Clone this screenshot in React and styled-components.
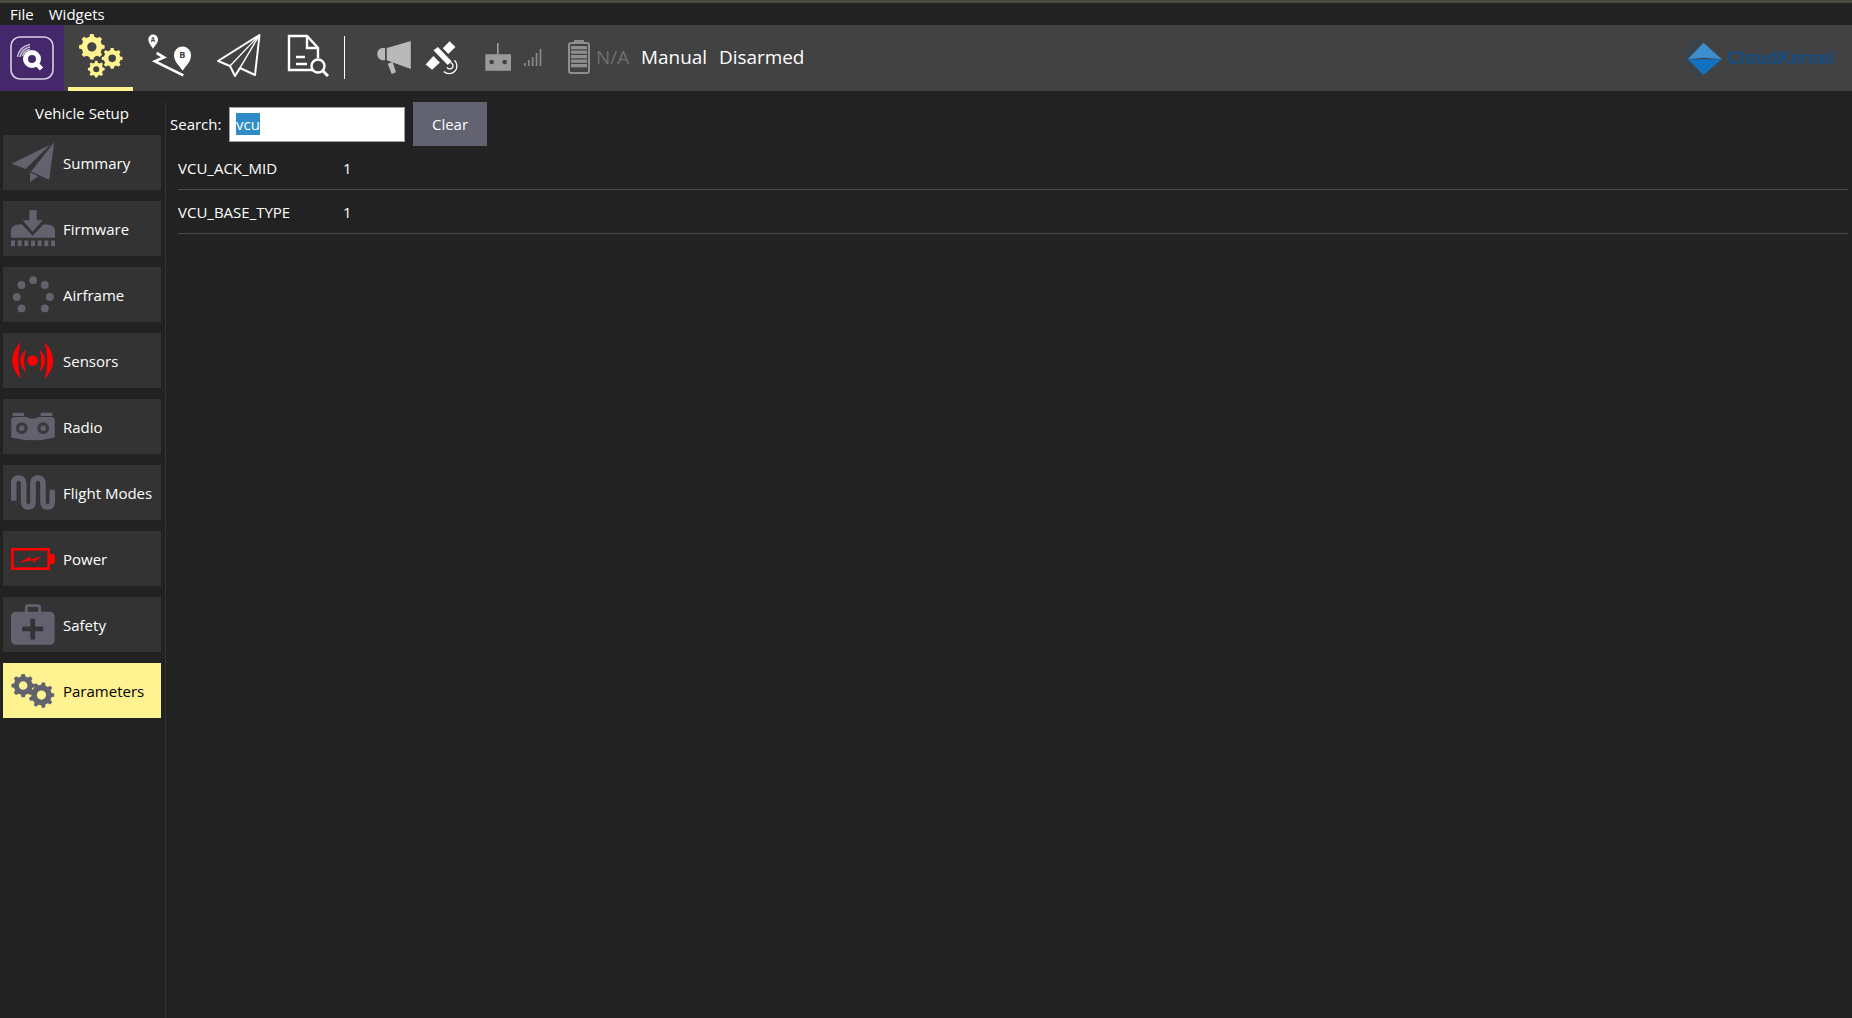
import React from "react";
import styled, { createGlobalStyle } from "styled-components";

const GlobalStyle = createGlobalStyle`
  html, body {
    margin: 0;
    height: 100%;
    overflow: hidden;
    background: #222222;
  }
  * {
    box-sizing: border-box;
  }
`;

const Page = styled.div`
  height: 100vh;
  display: flex;
  flex-direction: column;
  background: #222222;
  color: #ffffff;
  font-family: "Open Sans", "Noto Sans", sans-serif;
  border-top: 3px solid #4c4c44;
`;

const MenuBar = styled.div`
  height: 22px;
  display: flex;
  align-items: center;
  gap: 15px;
  padding-left: 10px;
  font-size: 15px;
`;

const Toolbar = styled.div`
  height: 66px;
  display: flex;
  align-items: center;
  background: #424242;
`;

const LogoButton = styled.div`
  width: 64px;
  height: 100%;
  display: flex;
  align-items: center;
  justify-content: center;
  background: #45286c;
  margin-right: 4px;
`;

const ToolButton = styled.div`
  width: 65px;
  height: 100%;
  margin-right: 4px;
  display: flex;
  align-items: center;
  justify-content: center;
  padding-bottom: 2px;
  border-bottom: 4px solid ${(p) => (p.$active ? "#fff291" : "transparent")};
  border-top: 1px solid transparent;
`;

const Divider = styled.div`
  width: 1px;
  height: 43px;
  margin-bottom: 1px;
  margin-right: 31px;
  background: #ffffff;
`;

const StatusGroup = styled.div`
  height: 100%;
  display: flex;
  align-items: center;
  padding-bottom: 2px;
`;

const Glyph = styled.svg`
  display: block;
  flex: none;
  width: ${(p) => p.$w}px;
  height: ${(p) => p.$h}px;
  margin-right: ${(p) => p.$mr || 0}px;
`;

const StatusText = styled.span`
  font-size: 18.9px;
  color: ${(p) => (p.$dim ? "#6f6f6f" : "#ffffff")};
  margin-right: ${(p) => p.$mr || 0}px;
`;

const Brand = styled.div`
  margin-left: auto;
  padding-right: 18px;
  display: flex;
  align-items: center;
  gap: 5px;
  filter: blur(0.6px);
`;

const BrandName = styled.span`
  font-family: "Liberation Sans", sans-serif;
  font-weight: 700;
  font-size: 18px;
  color: #124f88;
`;

const Body = styled.div`
  flex: 1;
  display: flex;
  padding-top: 11px;
  min-height: 0;
`;

const Sidebar = styled.div`
  width: 166px;
  padding: 0 4px 0 3px;
  border-right: 1px solid #333333;
  display: flex;
  flex-direction: column;
  gap: 11px;
`;

const SideTitle = styled.div`
  height: 22px;
  line-height: 22px;
  text-align: center;
  font-size: 15px;
`;

const SideItem = styled.div`
  height: 55px;
  display: flex;
  align-items: center;
  gap: 8px;
  padding-left: 8px;
  font-size: 15px;
  background: ${(p) => (p.$active ? "#fff291" : "#333333")};
  color: ${(p) => (p.$active ? "#000000" : "#ffffff")};
`;

const SideIconBox = styled.div`
  width: 44px;
  height: 44px;
  flex: none;
  display: flex;
  align-items: center;
  justify-content: center;
`;

const Main = styled.div`
  flex: 1;
  min-width: 0;
  padding: 0 4px;
`;

const SearchRow = styled.div`
  height: 44px;
  display: flex;
  align-items: center;
  font-size: 15px;
`;

const SearchLabel = styled.span`
  width: 59px;
`;

const SearchBox = styled.div`
  width: 176px;
  height: 35px;
  margin-right: 8px;
  padding-left: 6px;
  display: flex;
  align-items: center;
  background: #ffffff;
  border: 1px solid #a0a0a0;
`;

const Selected = styled.span`
  background: #308cc6;
  color: #ffffff;
  line-height: 22px;
  font-size: 15px;
`;

const ClearButton = styled.div`
  width: 74px;
  height: 44px;
  display: flex;
  align-items: center;
  justify-content: center;
  background: #626270;
`;

const ParamList = styled.div`
  margin-left: 8px;
`;

const ParamRow = styled.div`
  height: 44px;
  display: flex;
  align-items: center;
  font-size: 15px;
  border-bottom: 1px solid #4a4a4a;
`;

const ParamName = styled.span`
  width: 165px;
`;

const GREY = "#62626f";
const YELLOW = "#fff291";

// outline of a cog with a round hole, used with fill-rule evenodd
function gearPath(cx, cy, r, teeth) {
  const inner = r * 0.8;
  const hole = r * 0.36;
  const step = (Math.PI * 2) / teeth;
  let d = "";
  for (let i = 0; i < teeth; i++) {
    const a = i * step;
    const pts = [
      [inner, a - step * 0.3],
      [r, a - step * 0.17],
      [r, a + step * 0.17],
      [inner, a + step * 0.3],
    ];
    pts.forEach(([rad, t], j) => {
      const x = (cx + Math.cos(t) * rad).toFixed(1);
      const y = (cy + Math.sin(t) * rad).toFixed(1);
      d += (i === 0 && j === 0 ? "M" : "L") + x + " " + y + " ";
    });
  }
  d += "Z ";
  d += `M${cx - hole} ${cy} a${hole} ${hole} 0 1 0 ${hole * 2} 0 a${hole} ${hole} 0 1 0 ${-hole * 2} 0 Z`;
  return d;
}

const QLogo = () => (
  <Glyph $w={44} $h={44} viewBox="0 0 44 44" fill="none">
    <rect x="1" y="1" width="42" height="42" rx="9" stroke="#d9d2e4" strokeWidth="1.6" />
    <circle cx="22" cy="23" r="6.5" stroke="#ffffff" strokeWidth="5" />
    <path d="M25 26 L31.5 33" stroke="#ffffff" strokeWidth="4.5" />
    <path d="M7.5 21 A14.5 14.5 0 0 1 20 8.5" stroke="#c9c0d6" strokeWidth="1.5" />
    <path d="M10 21 A12 12 0 0 1 20 11" stroke="#c9c0d6" strokeWidth="1.5" />
    <path d="M12.5 20 A9.5 9.5 0 0 1 20 13.5" stroke="#c9c0d6" strokeWidth="1.5" />
  </Glyph>
);

const VehicleGears = () => (
  <Glyph $w={44} $h={44} viewBox="237 108 130 130" fill={YELLOW}>
    <path fillRule="evenodd" d={gearPath(275, 146, 38, 8)} />
    <path fillRule="evenodd" d={gearPath(335, 180, 31, 8)} />
    <path fillRule="evenodd" d={gearPath(288, 212, 25, 8)} />
  </Glyph>
);

const RouteIcon = () => (
  <Glyph $w={44} $h={44} viewBox="444 108 132 132">
    <path fill="#ffffff" d="M459 152 C452 142 445 135 445 124 A14.5 14.5 0 0 1 474 124 C474 135 466 142 459 152 Z" />
    <text x="459" y="131" textAnchor="middle" fontFamily="Open Sans" fontWeight="700" fontSize="19" fill="#424242">A</text>
    <path fill="#ffffff" d="M548 218 C535 200 522 190 522 171 A25.5 25.5 0 0 1 573 171 C573 190 561 200 548 218 Z" />
    <text x="547" y="180" textAnchor="middle" fontFamily="Open Sans" fontWeight="700" fontSize="27" fill="#424242">B</text>
    <path d="M470 165 L492 178 L465 190 L550 232" fill="none" stroke="#ffffff" strokeWidth="8" />
  </Glyph>
);

const PlaneIcon = () => (
  <Glyph $w={44} $h={44} viewBox="217 36 44 44" fill="none" stroke="#ffffff" strokeWidth="2" strokeLinejoin="round">
    <path d="M259.5 37 L218 63 L230 68 L235 78 L240 70 L255 77 Z" />
    <path d="M259.5 37 L230 68 M259.5 37 L235 78 M259.5 37 L240 70" strokeWidth="1.3" />
  </Glyph>
);

const LogsIcon = () => (
  <Glyph $w={42} $h={43} viewBox="0 0 42 43" fill="none" stroke="#ffffff" strokeWidth="2.4">
    <path d="M26 36 L2 36 L2 2 L20 2 L31 14 L31 24" />
    <path d="M20 2 L20 14 L31 14" />
    <path d="M9 23 L18 23 M9 30 L20 30" />
    <circle cx="31" cy="32" r="6.5" />
    <path d="M36 37 L41 42" strokeWidth="3" />
  </Glyph>
);

const Megaphone = () => (
  <Glyph $w={35} $h={33} $mr={14} viewBox="48 122 105 100" fill="#b9b9b9">
    <path d="M75 143 L75 180 L66 180 A19 19 0 0 1 66 143 Z" />
    <path d="M80 143 L153 122 L153 207 L80 180 Z" />
    <path d="M83 191 L98 186 L108 217 L95 222 Z" />
  </Glyph>
);

const Satellite = () => (
  <Glyph $w={34} $h={35} $mr={26} viewBox="192 122 105 105">
    <path fill="#ffffff" d="M218 152 L232 142 L274 186 L262 198 Z" />
    <path fill="#ffffff" d="M247 146 L268 124 L286 142 L264 164 Z" />
    <path fill="#ffffff" d="M194 196 L218 170 L238 190 L214 212 Z" />
    <path fill="none" stroke="#ffffff" strokeWidth="4" d="M270 190 A10 10 0 1 1 260 205" />
    <path fill="none" stroke="#ffffff" strokeWidth="4" d="M283 183 A24 24 0 0 1 250 218" />
  </Glyph>
);

const RcIcon = () => (
  <Glyph $w={26} $h={28} $mr={13} viewBox="372 128 78 84">
    <rect x="408" y="128" width="5" height="36" fill="#9a9a9a" />
    <path fillRule="evenodd" fill="#9a9a9a" d="M373 162 H450 V211 H373 Z M385 185 a7 7 0 1 0 14 0 a7 7 0 1 0 -14 0 Z M424 185 a7 7 0 1 0 14 0 a7 7 0 1 0 -14 0 Z" />
  </Glyph>
);

const SignalBars = () => (
  <Glyph $w={18} $h={17} $mr={26} viewBox="0 0 18 17" fill="#8a8a8a">
    {[3, 6, 9, 13, 17].map((h, i) => (
      <rect key={i} x={i * 3.9} y={17 - h} width="1.7" height={h} />
    ))}
  </Glyph>
);

const BatteryIcon = () => (
  <Glyph $w={22} $h={34} $mr={6} viewBox="0 0 22 34">
    <path d="M6 0 H16 V3 H6 Z" fill="#8e8e8e" />
    <rect x="1" y="3" width="20" height="30" rx="2" fill="none" stroke="#8e8e8e" strokeWidth="2" />
    {[6, 10.5, 15, 19.5, 24].map((y) => (
      <rect key={y} x="3" y={y} width="16" height="3.3" fill="#8e8e8e" />
    ))}
  </Glyph>
);

const BrandMark = () => (
  <Glyph $w={37} $h={35} viewBox="105 60 110 105">
    <path d="M150 62 A52 52 0 0 0 150 162" fill="none" stroke="#144c7c" strokeWidth="3" />
    <path d="M160 65 L215 115 L160 110 L113 115 Z" fill="#3b8fd0" />
    <path d="M113 115 L215 115 L160 162 Z" fill="#1272c0" />
  </Glyph>
);

const SummaryIcon = () => (
  <Glyph $w={44} $h={41} viewBox="33 160 130 122" fill={GREY}>
    <path d="M34 225 L149 168 L76 240 Z" />
    <path d="M161 161 L146 272 L92 248 Z" />
    <path d="M89 250 L114 262 L89 280 Z" />
  </Glyph>
);

const FirmwareIcon = () => (
  <Glyph $w={44} $h={37} viewBox="33 365 132 110" fill={GREY}>
    <path d="M88 365 H110 V395 H128 L98 430 L68 395 H88 Z" />
    <path d="M33 448 V425 Q35 410 55 408 H66 L98 442 L130 408 H142 Q163 410 165 425 V448 Z" />
    {[0, 1, 2, 3, 4, 5, 6].map((i) => (
      <rect key={i} x={33 + i * 20} y="456" width="12" height="17" />
    ))}
  </Glyph>
);

const AirframeIcon = () => (
  <Glyph $w={41} $h={37} viewBox="33 50 130 114" fill={GREY}>
    {[
      [60, 77],
      [97, 62],
      [134, 77],
      [150, 115],
      [134, 151],
      [60, 151],
      [45, 115],
    ].map(([cx, cy]) => (
      <circle key={cx + "-" + cy} cx={cx} cy={cy} r="12.5" />
    ))}
  </Glyph>
);

const SensorsIcon = () => (
  <Glyph $w={44} $h={38} viewBox="33 250 132 115" fill="#ff0000">
    <circle cx="98" cy="306" r="16" />
    <path d="M62 250 Q10 306 62 362 Q46 306 62 250 Z" />
    <path d="M78 272 Q42 306 78 342 Q66 306 78 272 Z" />
    <path d="M134 250 Q186 306 134 362 Q150 306 134 250 Z" />
    <path d="M118 272 Q154 306 118 342 Q130 306 118 272 Z" />
  </Glyph>
);

const RadioIcon = () => (
  <Glyph $w={44} $h={29} viewBox="33 458 132 88">
    <path fill={GREY} d="M37 460 H72 V470 H37 Z M122 460 H158 V470 H122 Z" />
    <path fill={GREY} d="M33 482 Q33 473 45 473 H80 L90 478 H105 L115 473 H152 Q165 473 165 482 V535 Q100 552 33 535 Z" />
    <circle cx="65" cy="507" r="18" fill="#3a3a3e" />
    <circle cx="65" cy="507" r="8" fill={GREY} />
    <circle cx="130" cy="507" r="18" fill="#3a3a3e" />
    <circle cx="130" cy="507" r="8" fill={GREY} />
  </Glyph>
);

const ModesIcon = () => (
  <Glyph $w={44} $h={35} viewBox="33 78 132 105" fill="none" stroke={GREY} strokeWidth="17">
    <path d="M41 155 V105 Q41 87 56 87 Q71 87 71 105 V155 Q71 174 85 174 Q99 174 99 155 V105 Q99 87 114 87 Q129 87 129 105 V155 Q129 174 143 174 Q157 174 157 155 V122" />
  </Glyph>
);

const PowerIcon = () => (
  <Glyph $w={44} $h={22} viewBox="33 294 132 66">
    <rect x="37" y="298" width="109" height="58" fill="none" stroke="#ff0000" strokeWidth="8" />
    <path d="M150 312 H160 L165 318 V336 L160 342 H150 Z" fill="#ff0000" />
    <path d="M57 339 L92 319 L92 329 L126 317 L100 338 L98 330 Z" fill="#ff0000" />
  </Glyph>
);

const SafetyIcon = () => (
  <Glyph $w={44} $h={41} viewBox="33 468 130 120">
    <rect x="78" y="472" width="40" height="30" rx="6" fill="none" stroke={GREY} strokeWidth="8" />
    <rect x="33" y="490" width="129" height="98" rx="14" fill={GREY} />
    <path d="M90 511 H104 V534 H128 V548 H104 V572 H90 V548 H66 V534 H90 Z" fill="#333337" />
  </Glyph>
);

const ParamsIcon = () => (
  <Glyph $w={44} $h={34} viewBox="35 675 130 100" fill={GREY}>
    <path fillRule="evenodd" d={gearPath(71, 709, 35, 8)} />
    <path fillRule="evenodd" d={gearPath(125, 737, 38, 9)} />
  </Glyph>
);

const sideItems = [
  { label: "Summary", Icon: SummaryIcon },
  { label: "Firmware", Icon: FirmwareIcon },
  { label: "Airframe", Icon: AirframeIcon },
  { label: "Sensors", Icon: SensorsIcon },
  { label: "Radio", Icon: RadioIcon },
  { label: "Flight Modes", Icon: ModesIcon },
  { label: "Power", Icon: PowerIcon },
  { label: "Safety", Icon: SafetyIcon },
  { label: "Parameters", Icon: ParamsIcon, active: true },
];

const params = [
  { name: "VCU_ACK_MID", value: "1" },
  { name: "VCU_BASE_TYPE", value: "1" },
];

export default function App() {
  return (
    <Page>
      <GlobalStyle />
      <MenuBar>
        <span>File</span>
        <span>Widgets</span>
      </MenuBar>
      <Toolbar>
        <LogoButton>
          <QLogo />
        </LogoButton>
        <ToolButton $active>
          <VehicleGears />
        </ToolButton>
        <ToolButton>
          <RouteIcon />
        </ToolButton>
        <ToolButton>
          <PlaneIcon />
        </ToolButton>
        <ToolButton>
          <LogsIcon />
        </ToolButton>
        <Divider />
        <StatusGroup>
          <Megaphone />
          <Satellite />
          <RcIcon />
          <SignalBars />
          <BatteryIcon />
          <StatusText $dim $mr={12}>N/A</StatusText>
          <StatusText $mr={12}>Manual</StatusText>
          <StatusText>Disarmed</StatusText>
        </StatusGroup>
        <Brand>
          <BrandMark />
          <BrandName>CloudKernel</BrandName>
        </Brand>
      </Toolbar>
      <Body>
        <Sidebar>
          <SideTitle>Vehicle Setup</SideTitle>
          {sideItems.map(({ label, Icon, active }) => (
            <SideItem key={label} $active={active}>
              <SideIconBox>
                <Icon />
              </SideIconBox>
              {label}
            </SideItem>
          ))}
        </Sidebar>
        <Main>
          <SearchRow>
            <SearchLabel>Search:</SearchLabel>
            <SearchBox>
              <Selected>vcu</Selected>
            </SearchBox>
            <ClearButton>Clear</ClearButton>
          </SearchRow>
          <ParamList>
            {params.map((p) => (
              <ParamRow key={p.name}>
                <ParamName>{p.name}</ParamName>
                <span>{p.value}</span>
              </ParamRow>
            ))}
          </ParamList>
        </Main>
      </Body>
    </Page>
  );
}
